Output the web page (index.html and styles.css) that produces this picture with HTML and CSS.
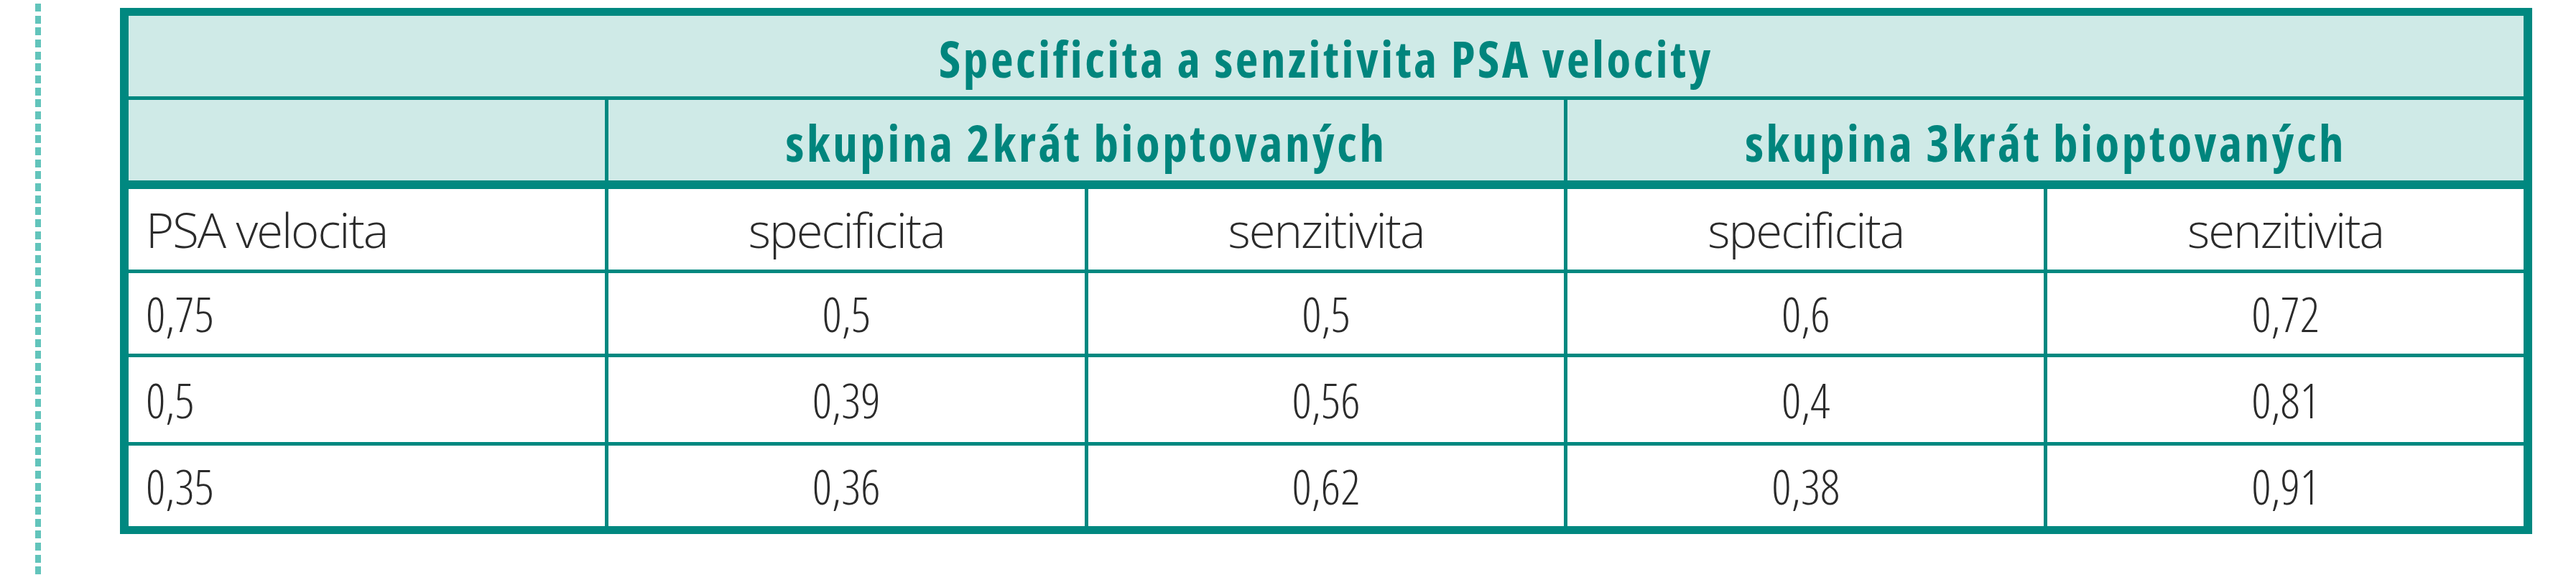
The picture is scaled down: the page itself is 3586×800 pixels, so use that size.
FILE: index.html
```html
<!DOCTYPE html>
<html lang="cs">
<head>
<meta charset="utf-8">
<title>Specificita a senzitivita PSA velocity</title>
<link rel="stylesheet" href="styles.css">
</head>
<body>
<div class="page">
  <div class="rule"></div>
  <div class="tbl">
    <div class="cell head title">Specificita a senzitivita PSA velocity</div>
    <div class="cell head sub"></div>
    <div class="cell head sub group">skupina 2krát bioptovaných</div>
    <div class="cell head sub group">skupina 3krát bioptovaných</div>

    <div class="cell label">PSA velocita</div>
    <div class="cell">specificita</div>
    <div class="cell">senzitivita</div>
    <div class="cell">specificita</div>
    <div class="cell">senzitivita</div>

    <div class="cell label num">0,75</div>
    <div class="cell num">0,5</div>
    <div class="cell num">0,5</div>
    <div class="cell num">0,6</div>
    <div class="cell num">0,72</div>

    <div class="cell label num">0,5</div>
    <div class="cell num">0,39</div>
    <div class="cell num">0,56</div>
    <div class="cell num">0,4</div>
    <div class="cell num">0,81</div>

    <div class="cell label num">0,35</div>
    <div class="cell num">0,36</div>
    <div class="cell num">0,62</div>
    <div class="cell num">0,38</div>
    <div class="cell num">0,91</div>
  </div>
</div>
</body>
</html>
```

FILE: styles.css
```css
html, body {
  margin: 0;
  padding: 0;
  background: #ffffff;
}

.page {
  display: flex;
  align-items: flex-start;
  height: 800px;
  overflow: hidden;
}

.rule {
  flex: none;
  width: 8px;
  height: 800px;
  margin-left: 49px;
  background: repeating-linear-gradient(to bottom, #62c4bb 0 11px, transparent 11px 16.67px);
  background-position: 0 5px;
}

.tbl {
  flex: none;
  box-sizing: border-box;
  width: 3358px;
  margin-left: 110px;
  margin-top: 11px;
  padding: 11px 12px;
  background: #008880;
  display: grid;
  grid-template-columns: repeat(5, 1fr);
  grid-template-rows: 112px 119px 112px 112px 118px 112px;
  gap: 5px;
  font-family: "Open Sans", "Liberation Sans", sans-serif;
  font-size: 67px;
  color: #2b2b2b;
}

.cell {
  background: #ffffff;
  display: flex;
  align-items: center;
  justify-content: center;
  font-weight: 300;
  font-stretch: 100%;
  letter-spacing: -2px;
  white-space: nowrap;
}

.num {
  font-stretch: 75%;
  letter-spacing: 0;
}

.head {
  background: #cfeae7;
  color: #00857d;
  font-size: 69px;
  font-weight: 700;
  font-stretch: 75%;
  letter-spacing: 3.6px;
  padding-top: 6px;
  box-sizing: border-box;
}

.title {
  grid-column: 1 / -1;
}

.sub {
  margin-bottom: 7px;
}

.group {
  grid-column: span 2;
}

.label {
  justify-content: flex-start;
  padding-left: 24px;
}
```
